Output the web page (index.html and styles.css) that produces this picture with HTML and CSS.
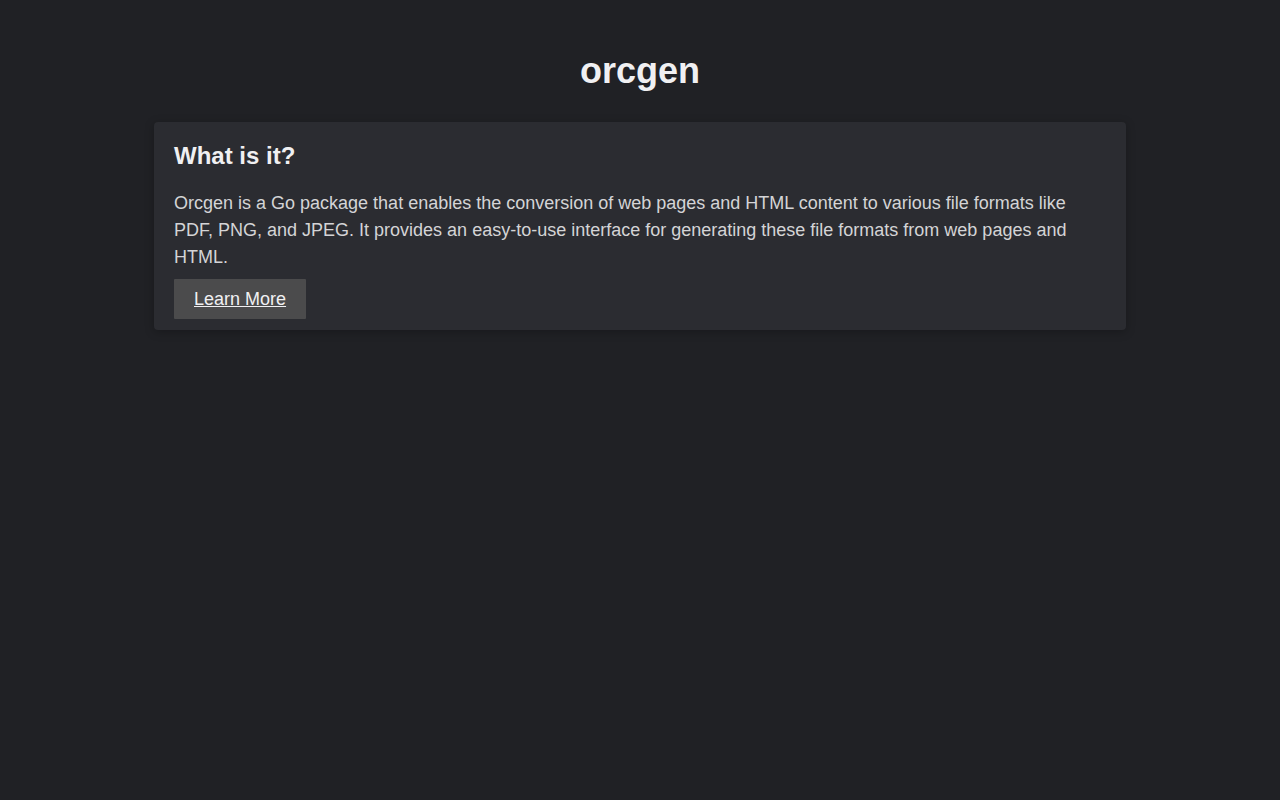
FILE: index.html
```html
<!DOCTYPE html>
<html lang="en">
<head>
<meta charset="utf-8">
<title>orcgen</title>
<link rel="stylesheet" href="styles.css">
</head>
<body>
<header class="site-header">
  <h1 class="site-title">orcgen</h1>
</header>
<main class="container">
  <section class="card">
    <h2 class="card-title">What is it?</h2>
    <p class="card-text">Orcgen is a Go package that enables the conversion of web pages and HTML content to various file formats like PDF, PNG, and JPEG. It provides an easy-to-use interface for generating these file formats from web pages and HTML.</p>
    <div class="card-actions">
      <a class="button" href="#">Learn More</a>
    </div>
  </section>
</main>
</body>
</html>
```

FILE: styles.css
```css
html, body {
  margin: 0;
  padding: 0;
}

body {
  background: #202125;
  color: #d4d4d6;
  font-family: "Liberation Sans", Arial, sans-serif;
  min-height: 800px;
}

.site-header {
  padding-top: 50px;
  padding-bottom: 31px;
}

.site-title {
  margin: 0;
  text-align: center;
  font-size: 36px;
  line-height: 41px;
  font-weight: 700;
  color: #f0f0f2;
}

.container {
  max-width: 972px;
  margin: 0 auto;
}

.card {
  background: #2b2c31;
  border-radius: 4px;
  padding: 20px 20px 11px;
  box-shadow: 0 2px 10px rgba(0, 0, 0, 0.25);
}

.card-title {
  margin: 0 0 20px;
  font-size: 24px;
  line-height: 28px;
  font-weight: 700;
  color: #f0f0f2;
}

.card-text {
  margin: 0 0 8px;
  font-size: 18px;
  line-height: 27px;
  color: #d4d4d6;
}

.card-actions {
  display: flex;
}

.button {
  display: inline-block;
  padding: 10px 20px;
  font-size: 18px;
  line-height: 20px;
  color: #f0f0f2;
  background: #4b4b4c;
  text-decoration: underline;
  border-radius: 1px;
}
```
